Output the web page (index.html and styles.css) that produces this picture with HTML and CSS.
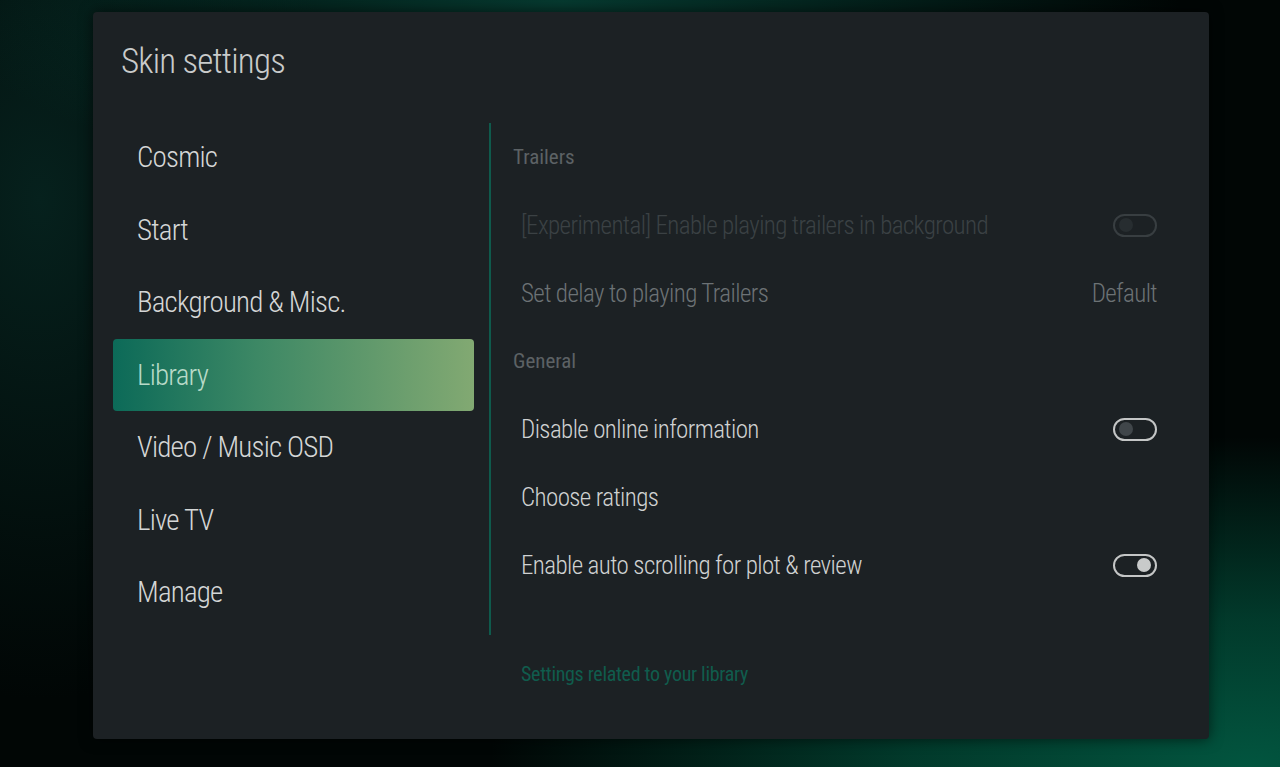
FILE: index.html
```html
<!DOCTYPE html>
<html lang="en">
<head>
    <meta charset="UTF-8">
    <meta name="viewport" content="width=device-width, initial-scale=1.0">
    <title>Skin settings</title>
    <link rel="stylesheet" href="styles.css">
</head>
<body>
    <div class="panel">
        <h1 class="title">Skin settings</h1>
        <div class="content">
            <ul class="menu">
                <li>Cosmic</li>
                <li>Start</li>
                <li>Background &amp; Misc.</li>
                <li class="active">Library</li>
                <li>Video / Music OSD</li>
                <li>Live TV</li>
                <li>Manage</li>
            </ul>
            <div class="options">
                <div class="group">Trailers</div>
                <div class="row disabled">
                    <span>[Experimental] Enable playing trailers in background</span>
                    <span class="toggle"></span>
                </div>
                <div class="row dim">
                    <span>Set delay to playing Trailers</span>
                    <span class="value">Default</span>
                </div>
                <div class="group">General</div>
                <div class="row">
                    <span>Disable online information</span>
                    <span class="toggle"></span>
                </div>
                <div class="row">
                    <span>Choose ratings</span>
                </div>
                <div class="row">
                    <span>Enable auto scrolling for plot &amp; review</span>
                    <span class="toggle on"></span>
                </div>
            </div>
            <div class="hint">Settings related to your library</div>
        </div>
    </div>
</body>
</html>
```

FILE: styles.css
```css
html, body { margin: 0; height: 767px; overflow: hidden; }
body {
    font-family: "Roboto Condensed", "Liberation Sans Narrow", Roboto, sans-serif;
    font-weight: 300;
    background:
        radial-gradient(ellipse 760px 330px at 1250px 767px, #02553f 0%, rgba(2,85,63,0.65) 45%, rgba(2,85,63,0) 100%),
        radial-gradient(ellipse 620px 200px at 560px 0px, #063a30 0%, rgba(6,58,48,0) 100%),
        radial-gradient(ellipse 300px 500px at 40px 200px, #06211d 0%, rgba(6,33,29,0) 100%),
        #010605;
}
.panel {
    margin: 12px 71px 0 93px;
    height: 727px;
    box-sizing: border-box;
    background: #1c2124;
    border-radius: 4px;
    padding: 0 52px 0 20px;
    box-shadow: 0 0 14px rgba(0,0,0,0.6);
}
.title {
    margin: 0 0 9px 0;
    padding-left: 8px;
    height: 100px;
    line-height: 100px;
    font-size: 35px;
    font-weight: 300;
    letter-spacing: -0.8px;
    color: #c9cbcb;
}
.content { display: grid; grid-template-columns: 361px 1fr; column-gap: 15px; }
.menu { list-style: none; margin: 0; padding: 0; }
.menu li {
    height: 72.5px;
    line-height: 72px;
    padding-left: 24px;
    font-size: 29px;
    letter-spacing: -0.8px;
    color: #d4d6d6;
    border-radius: 4px;
}
.menu li.active {
    background: linear-gradient(90deg, #0c6a58 0%, #3d8865 40%, #82a972 100%);
    color: #b8dac8;
}
.options {
    margin-top: 2px;
    border-left: 2px solid #0f5a4c;
    min-height: 512px;
    box-sizing: border-box;
}
.group {
    height: 68px;
    line-height: 68px;
    padding-left: 22px;
    font-size: 21px;
    font-weight: 400;
    color: #5c6265;
}
.row {
    height: 68px;
    padding-left: 30px;
    display: flex;
    align-items: center;
    justify-content: space-between;
    font-size: 25px;
    letter-spacing: -0.6px;
    color: #d0d2d2;
}
.row.disabled { color: #3b4144; }
.row.dim { color: #6c7275; }
.value { color: #6c7275; }
.toggle {
    position: relative;
    width: 44px;
    height: 23px;
    box-sizing: border-box;
    border: 2px solid #c4c6c6;
    border-radius: 12px;
}
.toggle::after {
    content: "";
    position: absolute;
    top: 2.5px;
    left: 4px;
    width: 14px;
    height: 14px;
    border-radius: 50%;
    background: #40464a;
}
.toggle.on::after { left: auto; right: 4px; background: #c8caca; }
.disabled .toggle { border-color: #383e41; }
.disabled .toggle::after { background: #272d30; }
.hint {
    grid-column: 2;
    margin-top: 24px;
    padding-left: 32px;
    line-height: 30px;
    font-size: 20px;
    font-weight: 400;
    letter-spacing: -0.3px;
    color: #105c4d;
}
```
